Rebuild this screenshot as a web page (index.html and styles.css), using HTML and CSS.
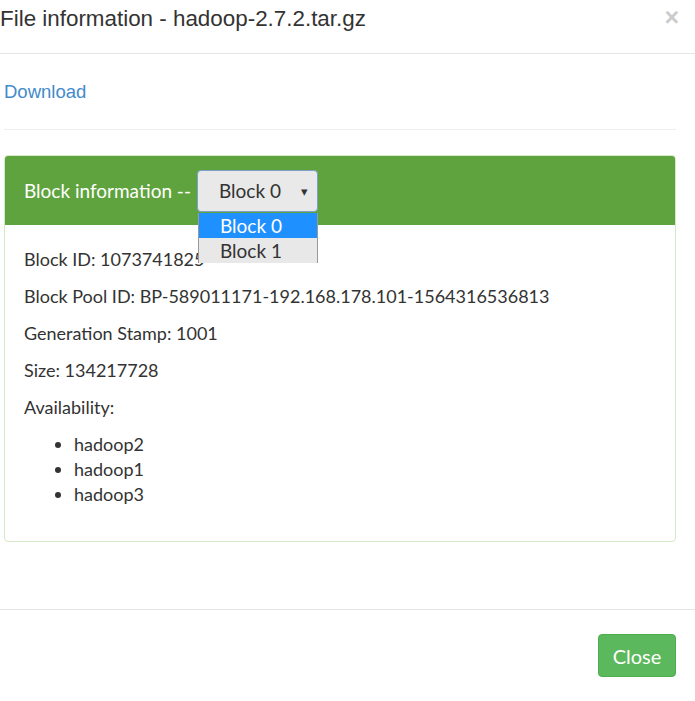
FILE: index.html
```html
<!DOCTYPE html>
<html>
<head>
<meta charset="utf-8">
<link rel="stylesheet" href="styles.css">
</head>
<body>
<div class="modal">
  <div class="modal-header">
    <h4 class="modal-title">File information - hadoop-2.7.2.tar.gz</h4>
    <span class="close">&times;</span>
  </div>
  <div class="modal-body">
    <div class="download"><a href="#">Download</a></div>
    <hr class="sep">
    <div class="panel">
      <div class="panel-heading">
        <span class="heading-text">Block information --</span>
        <div class="select-wrap">
          <div class="select"><span>Block 0</span><span class="caret">&#9662;</span></div>
          <ul class="options">
            <li class="opt active">Block 0</li>
            <li class="opt">Block 1</li>
          </ul>
        </div>
      </div>
      <div class="panel-body">
        <p>Block ID: 1073741825</p>
        <p>Block Pool ID: BP-589011171-192.168.178.101-1564316536813</p>
        <p>Generation Stamp: 1001</p>
        <p>Size: 134217728</p>
        <p>Availability:</p>
        <ul class="hosts">
          <li>hadoop2</li>
          <li>hadoop1</li>
          <li>hadoop3</li>
        </ul>
      </div>
    </div>
  </div>
  <div class="modal-footer">
    <button class="btn-close">Close</button>
  </div>
</div>
</body>
</html>
```
FILE: styles.css
```css
html, body {
  margin: 0;
  padding: 0;
  background: #fff;
  overflow: hidden;
}
.modal {
  width: 695px;
  font-family: "Lato", "Liberation Sans", sans-serif;
  color: #333;
}
.modal-header {
  height: 54px;
  box-sizing: border-box;
  border-bottom: 1px solid #e5e5e5;
  display: flex;
  justify-content: space-between;
  align-items: flex-start;
  padding: 5px 16px 0 0;
}
.modal-title {
  margin: 0;
  font-family: "Liberation Sans", Arial, sans-serif;
  font-weight: normal;
  font-size: 22.4px;
  line-height: 28px;
  color: #333;
}
.close {
  font-family: "Liberation Sans", Arial, sans-serif;
  font-size: 25px;
  font-weight: bold;
  color: #000;
  opacity: 0.2;
  line-height: 20px;
  margin-top: 2px;
}
.modal-body {
  padding: 25px 19px 0 4px;
}
.download {
  font-family: "Liberation Sans", Arial, sans-serif;
  font-size: 18.5px;
  line-height: 26px;
}
.download a {
  color: #428bca;
  text-decoration: none;
}
.sep {
  margin: 24px 0 25px;
  border: 0;
  border-top: 1px solid #eee;
}
.panel {
  border: 1px solid #d6e9c6;
  border-radius: 4px;
  background: #fff;
}
.panel-heading {
  background: #5fa33e;
  height: 69px;
  display: flex;
  align-items: center;
  padding: 0 19px;
  border-radius: 3px 3px 0 0;
}
.heading-text {
  color: #fff;
  font-size: 19px;
  margin-right: 6px;
}
.select-wrap {
  position: relative;
}
.select {
  width: 121px;
  height: 42px;
  box-sizing: border-box;
  background: #e9e9e9;
  border: 1px solid #7f9fc9;
  border-radius: 4px;
  display: flex;
  align-items: center;
  justify-content: space-between;
  padding: 0 9px 0 21px;
  font-size: 19px;
  color: #333;
}
.caret {
  font-size: 13px;
  color: #333;
}
.options {
  position: absolute;
  left: 1px;
  top: 43px;
  width: 120px;
  margin: 0;
  padding: 0;
  list-style: none;
  border-left: 1px solid #999;
  border-right: 1px solid #999;
  box-sizing: border-box;
}
.opt {
  height: 25px;
  line-height: 25px;
  padding-left: 21px;
  font-size: 19px;
  background: #e8e8e8;
  color: #333;
}
.opt.active {
  background: #1e90ff;
  color: #fff;
}
.panel-body {
  padding: 22px 19px 34px;
  font-size: 18px;
  line-height: 25px;
}
.panel-body p {
  margin: 0 0 12px;
}
.hosts {
  margin: 0;
  padding-left: 50px;
}
.modal-footer {
  margin-top: 67px;
  border-top: 1px solid #e5e5e5;
  display: flex;
  justify-content: flex-end;
  padding: 24px 19px 0 0;
}
.btn-close {
  width: 78px;
  height: 43px;
  background: #5cb85c;
  border: 1px solid #4cae4c;
  border-radius: 4px;
  color: #fff;
  font-family: "Lato", "Liberation Sans", sans-serif;
  font-size: 20px;
  padding: 0;
}
```
